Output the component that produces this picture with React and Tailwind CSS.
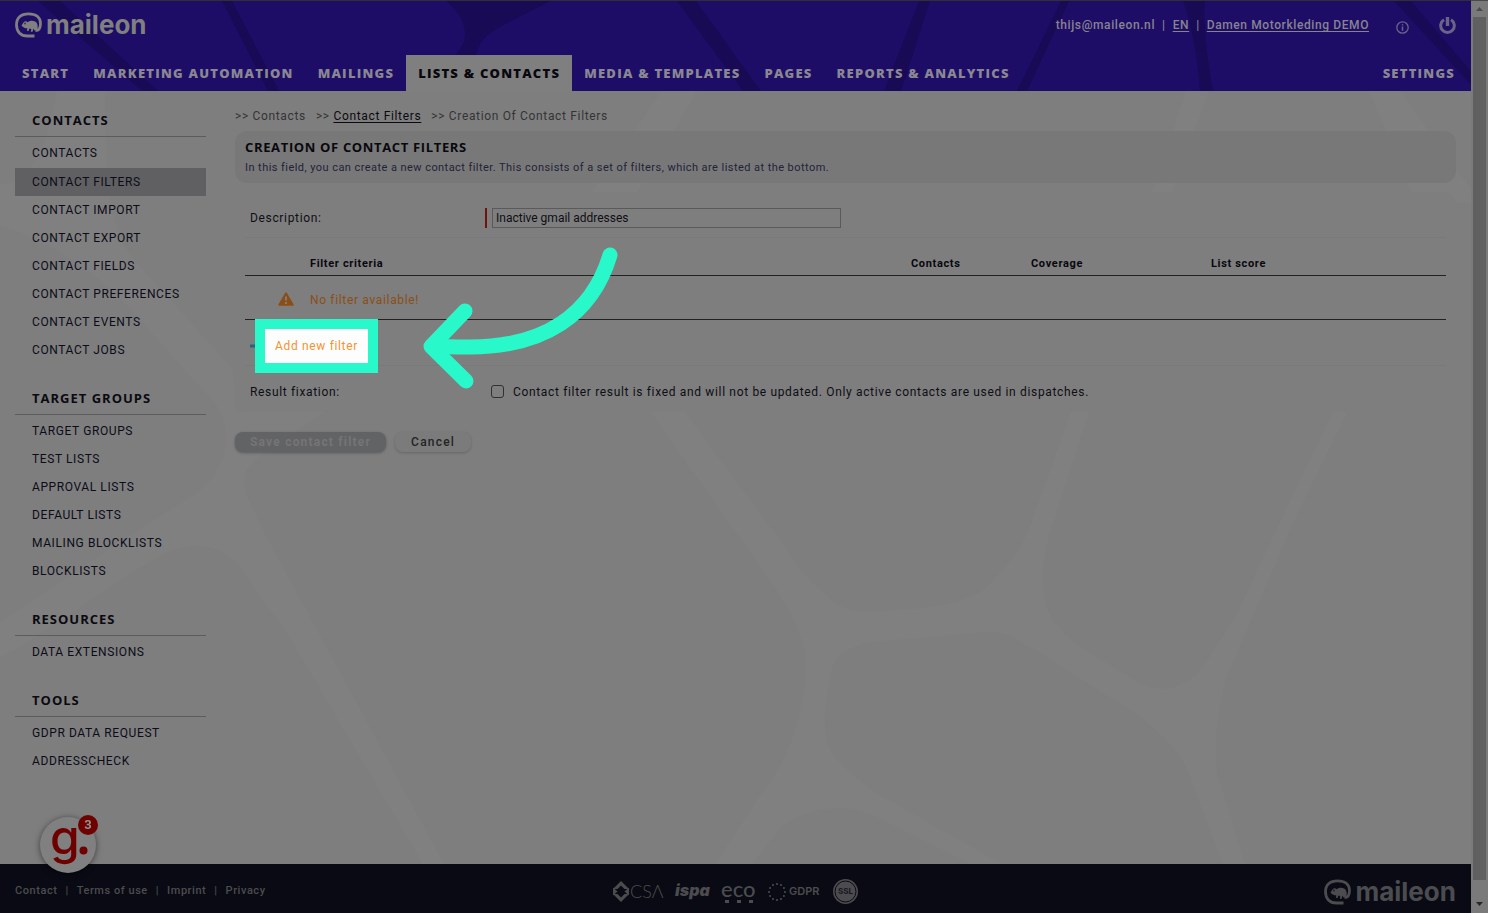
import clsx from 'clsx';

const MAIN_NAV = [
  'Start',
  'Marketing Automation',
  'Mailings',
  'Lists & Contacts',
  'Media & Templates',
  'Pages',
  'Reports & Analytics',
];

const SIDE_NAV = [
  {
    title: 'Contacts',
    items: [
      'Contacts',
      'Contact Filters',
      'Contact Import',
      'Contact Export',
      'Contact Fields',
      'Contact Preferences',
      'Contact Events',
      'Contact Jobs',
    ],
  },
  {
    title: 'Target Groups',
    items: ['Target Groups', 'Test Lists', 'Approval Lists', 'Default Lists', 'Mailing Blocklists', 'Blocklists'],
  },
  { title: 'Resources', items: ['Data Extensions'] },
  { title: 'Tools', items: ['GDPR Data Request', 'Addresscheck'] },
];

const FOOTER_LINKS = ['Contact', 'Terms of use', 'Imprint', 'Privacy'];

const RING = Array.from({ length: 12 }, (_, i) => (i * Math.PI) / 6);

function MaileonLogo({ className }) {
  return (
    <span className={clsx('flex items-center gap-1', className)}>
      <svg width="27" height="26" viewBox="0 0 27 26" fill="none" aria-hidden="true">
        <path
          d="M19.500 24H12.500C5.500 24 1.500 19.500 1.500 12.800C1.500 5.800 5.800 1.800 13.500 1.800C21 1.800 25.500 5.300 25.500 11.500C25.500 16 24 18.600 20.500 18.600"
          stroke="currentColor"
          strokeWidth="2.800"
        />
        <path
          d="M6.500 13.500L8.500 10.500C9.500 9 11.500 8.800 12.500 10.200C14 8.800 17.500 8 20 9.500C22.500 10.800 23.500 14 22 18L19.500 18.500L18.500 16.500L17.500 19.800H15.800L16.300 17L14.500 16.600L13.500 19H12L12.300 16.300C10 16.400 8 15.500 6.500 13.500Z"
          fill="currentColor"
        />
        <circle cx="10" cy="11.500" r="0.900" className="fill-black/60" />
      </svg>
      <span className="font-['Inter',sans-serif] text-[26px] leading-6 font-bold">maileon</span>
    </span>
  );
}

function HeaderPattern() {
  return (
    <svg
      className="absolute inset-0 h-full w-full"
      viewBox="0 0 1471 90"
      preserveAspectRatio="none"
      fill="#180a55"
      aria-hidden="true"
    >
      <path d="M38 0H60L158 90H142Z" />
      <path d="M222 0H232L279 90H268Z" />
      <path d="M446 0H550L500 26C485 34 479 42 476 54H455C464 45 467 35 464 26C462 16 455 8 446 0Z" />
      <path d="M677 0H696L761 90H743Z" />
      <path d="M919 0H930L901 90H884Z" />
      <path d="M1061 0H1069L1027 90H1017Z" />
      <path d="M1183 0H1205C1203 25 1207 55 1213 90H1200C1198 60 1192 25 1183 0Z" />
      <path d="M1394 0H1411L1471 70V84Z" />
    </svg>
  );
}

function PagePattern() {
  return (
    <svg
      className="absolute inset-0 h-full w-full"
      viewBox="0 0 1471 773"
      preserveAspectRatio="none"
      fill="#808080"
      aria-hidden="true"
    >
      <path d="M57 0H105C105 40 106 75 110 106C116 145 125 162 153 189L233 279L236 321H325L268 359C245 375 240 385 247 405L268 449L444 773H423L287 542L237 472C215 450 185 450 153 469C100 500 50 540 0 567V531L134 442L191 406C215 390 226 370 226 346C225 325 220 315 200 296L127 214C100 185 50 150 0 134V94C35 90 48 50 57 0Z" />
      <path d="M662 0H697L637 102H591Z" />
      <path d="M1186 0H1209L1172 102H1152Z" />
      <path d="M1369 0H1400L1471 98V112H1416Z" />
      <path d="M651 321H685L787 459C800 480 810 490 821 499C835 515 850 523 872 521L911 518C930 516 945 514 962 509C980 503 988 497 996 486C1012 470 1022 456 1030 436L1071 321H1089L1053 432C1045 455 1043 470 1043 489C1043 505 1046 518 1053 529C1060 540 1070 548 1081 556L1138 592C1155 600 1172 600 1189 589C1200 582 1206 573 1212 562C1235 530 1248 500 1262 469L1333 321H1347L1291 436L1234 569C1226 585 1222 600 1220 616C1215 640 1215 660 1217 682L1245 773H1223L1195 699C1190 680 1180 663 1166 649C1150 632 1130 617 1110 606L1019 549C1005 541 990 540 974 542L894 549C875 550 855 553 846 561C836 565 833 570 832 579C827 600 824 620 825 636C825 646 827 654 832 662C845 680 862 692 883 706L1002 773H971L883 729C860 717 843 715 826 718C806 720 793 727 781 736L752 773H715L764 699C778 680 787 664 793 646C801 620 806 600 806 572C806 562 803 550 798 539C790 518 780 503 770 489L713 409Z" />
    </svg>
  );
}

function MainNav() {
  return (
    <nav className="relative flex h-9 pr-1 pl-[10px] font-['Open_Sans',sans-serif] text-[13px] font-extrabold tracking-[0.095em] whitespace-nowrap uppercase">
      {MAIN_NAV.map((label) => (
        <a
          key={label}
          href="#"
          className={clsx(
            'flex items-center px-3 pt-px',
            label === 'Lists & Contacts' ? 'bg-[#7f7f7f] text-[#08080e]' : 'text-[#8a8792]'
          )}
        >
          {label}
        </a>
      ))}
      <a href="#" className="ml-auto flex items-center px-3 pt-px text-[#8a8792]">
        Settings
      </a>
    </nav>
  );
}

function Header() {
  return (
    <header className="relative border-t border-[#303030] bg-[#1d0d67] text-[#87848f]">
      <HeaderPattern />
      <div className="relative flex h-[54px] items-start justify-between px-[15px] pt-[11px]">
        <MaileonLogo className="text-[#808080]" />
        <div className="flex h-[26px] items-center text-xs font-medium tracking-wider">
          <span>thijs@maileon.nl</span>
          <span className="px-[7px]">|</span>
          <a href="#" className="underline underline-offset-2">EN</a>
          <span className="px-[7px]">|</span>
          <a href="#" className="underline underline-offset-2">Damen Motorkleding DEMO</a>
          <button type="button" aria-label="Information" className="mt-1 ml-[27px]">
            <svg width="13" height="13" viewBox="0 0 13 13" fill="none" stroke="#6a6488" aria-hidden="true">
              <circle cx="6.500" cy="6.500" r="5.700" strokeWidth="1.300" />
              <path d="M6.500 5.500V9.700M6.500 3.200V4.500" strokeWidth="1.500" />
            </svg>
          </button>
          <button type="button" aria-label="Log out" className="ml-[30px]">
            <svg width="17" height="17" viewBox="0 0 17 17" fill="none" stroke="#6a6488" aria-hidden="true">
              <path d="M5 2.800A6.800 6.800 0 1 0 12 2.800" strokeWidth="3" />
              <path d="M8.500 0V9" strokeWidth="3.400" />
            </svg>
          </button>
        </div>
      </div>
      <MainNav />
    </header>
  );
}

function Sidebar() {
  return (
    <aside className="flex w-[191px] shrink-0 flex-col gap-[18px] pt-[13px] uppercase">
      {SIDE_NAV.map((group) => (
        <nav key={group.title}>
          <h2 className="flex h-[33px] items-center border-b border-[#5c5c5c] pt-px pl-[17px] font-['Open_Sans',sans-serif] text-[13px] font-bold tracking-[1px] text-[#0a0a10]">
            {group.title}
          </h2>
          <ul className="pt-[2px] text-xs tracking-wider text-[#0c0c18]">
            {group.items.map((item) => (
              <li key={item} className={clsx(item === 'Contact Filters' && 'mt-px bg-[#606062]')}>
                <a href="#" className="flex h-7 items-center pl-[17px]">
                  {item}
                </a>
              </li>
            ))}
          </ul>
        </nav>
      ))}
    </aside>
  );
}

function Breadcrumb() {
  return (
    <nav className="flex h-10 items-center gap-[10px] pt-[10px] text-xs tracking-[0.055em] text-[#343434]">
      <span>&gt;&gt; Contacts</span>
      <span>
        &gt;&gt;{' '}
        <a href="#" className="text-[#0a0a10] underline underline-offset-2">
          Contact Filters
        </a>
      </span>
      <span>&gt;&gt; Creation Of Contact Filters</span>
    </nav>
  );
}

function FilterTable() {
  return (
    <table className="w-full table-fixed text-left">
      <colgroup>
        <col className="w-[60px]" />
        <col />
        <col className="w-[120px]" />
        <col className="w-[180px]" />
        <col className="w-[240px]" />
      </colgroup>
      <thead>
        <tr className="h-[37px] border-b border-[#222] text-[11px] leading-4 text-[#08080e]">
          <th aria-label="Status" />
          <th className="px-[5px] pt-4">Filter criteria</th>
          <th className="px-[5px] pt-4">Contacts</th>
          <th className="px-[5px] pt-4">Coverage</th>
          <th className="px-[5px] pt-4">List score</th>
        </tr>
      </thead>
      <tbody>
        <tr className="h-11 border-b border-[#222] text-xs text-[#8a4f17]">
          <td className="pt-1 pl-[33px]">
            <svg width="16" height="14" viewBox="0 0 16 14" aria-label="Warning">
              <path d="M8 1L15 13H1Z" fill="#8a4f17" stroke="#8a4f17" strokeWidth="1.500" strokeLinejoin="round" />
              <path d="M8 4.500V8.500M8 10V12" stroke="#808080" strokeWidth="1.800" />
            </svg>
          </td>
          <td className="px-[5px] pt-[6px]" colSpan={4}>
            No filter available!
          </td>
        </tr>
      </tbody>
    </table>
  );
}

function Arrow() {
  return (
    <svg
      className="pointer-events-none absolute bottom-[-25px] left-[177px] text-[#29f9ca]"
      width="200"
      height="145"
      viewBox="422 245 200 145"
      fill="none"
      stroke="currentColor"
      strokeWidth="15"
      strokeLinecap="round"
      strokeLinejoin="round"
      aria-hidden="true"
    >
      <path d="M610 255C592 315 544 347 470 347C458 347 445 347 432 346" />
      <path d="M465 311L431 346.500L466 381" />
    </svg>
  );
}

function FilterForm() {
  return (
    <form className="mt-[9px] text-xs tracking-[0.055em] text-[#0e0e14]">
      <div className="rounded-xl bg-[#7e7e7e] px-[10px]">
        <div className="flex h-[46px] items-center border-b border-[#797979] pt-[6px] pl-[5px]">
          <label htmlFor="description" className="w-[235px]">
            Description:
          </label>
          <div className="border-l-2 border-[#6f1408] pl-[5px]">
            <input
              id="description"
              defaultValue="Inactive gmail addresses"
              className="block h-5 w-[349px] border border-[#5a5a5a] px-[3px] tracking-normal"
            />
          </div>
        </div>
        <FilterTable />
        <div className="relative flex h-[46px] items-start border-b border-[#797979] pt-[9px] pl-[5px]">
          <svg width="15" height="34" viewBox="0 0 15 34" aria-hidden="true">
            <path d="M0 17H13M6.500 10V24" stroke="#2d627c" strokeWidth="3" />
          </svg>
          <button
            type="button"
            className="h-[34px] w-[103px] bg-[#fdfdfd] tracking-[0.055em] text-[#f59331] outline-10 outline-[#29f9ca]"
          >
            Add new filter
          </button>
          <Arrow />
        </div>
        <div className="flex h-[46px] items-center pt-[6px] pl-[5px]">
          <span className="w-[241px]">Result fixation:</span>
          <input
            id="fixation"
            type="checkbox"
            className="size-[13px] appearance-none rounded-[3px] border border-[#303030]"
          />
          <label htmlFor="fixation" className="pl-[9px]">
            Contact filter result is fixed and will not be updated. Only active contacts are used in dispatches.
          </label>
        </div>
      </div>
      <div className="flex gap-[9px] pt-5">
        <button
          type="submit"
          disabled
          className="h-5 rounded-lg bg-[#626365] px-[15px] pt-px font-bold tracking-widest text-[#757575] shadow-[0_1px_3px_rgba(0,0,0,0.3)]"
        >
          Save contact filter
        </button>
        <button
          type="button"
          className="h-5 rounded-lg bg-[#7b7b7b] px-4 pt-px font-medium tracking-widest text-[#242424] shadow-[0_1px_3px_rgba(0,0,0,0.2)]"
        >
          Cancel
        </button>
      </div>
    </form>
  );
}

function Certificates() {
  return (
    <svg
      className="overflow-visible tracking-normal"
      width="249"
      height="32"
      viewBox="611 876 249 32"
      fill="#4c4c50"
      role="img"
      aria-label="Certifications"
    >
      <path d="M621 881L629 889H624.500L621 885.500L617.500 889H613ZM621 902L629 894H624.500L621 897.500L617.500 894H613Z" />
      <path d="M613 887.500L617.500 891.500L613 895.500ZM629 887.500L624.500 891.500L629 895.500Z" />
      <text x="630" y="898" fontFamily="Lato, sans-serif" fontSize="18" fontWeight="300">CSΛ</text>
      <text x="675" y="896" fontFamily="Inter, sans-serif" fontSize="16" fontWeight="900" fontStyle="italic">ispa</text>
      <text x="721" y="897" fontFamily="Lato, sans-serif" fontSize="22">eco</text>
      <path d="M725 900H729V903H725ZM737 900H741V903H737ZM749 900H753V903H749Z" />
      {RING.map((angle) => (
        <circle key={angle} cx={777 + 8 * Math.cos(angle)} cy={892 + 8 * Math.sin(angle)} r="1" />
      ))}
      <text x="789" y="895" fontFamily="Inter, sans-serif" fontSize="11" fontWeight="600">GDPR</text>
      <circle cx="845.500" cy="891.500" r="12.500" />
      <circle cx="845.500" cy="891.500" r="10.500" fill="none" stroke="#090a13" strokeWidth="1" />
      <text x="845.500" y="894" textAnchor="middle" fontFamily="Inter, sans-serif" fontSize="8" fontWeight="700" fill="#17171f">
        SSL
      </text>
    </svg>
  );
}

function Footer() {
  return (
    <footer className="relative grid h-[49px] grid-cols-[1fr_auto_1fr] items-center bg-[#090a13] px-[15px] pt-[6px] text-[11px] font-medium tracking-wider text-[#4c4c50]">
      <div className="flex">
        {FOOTER_LINKS.map((label, i) => (
          <span key={label}>
            {i > 0 && <span className="px-2">|</span>}
            <a href="#">{label}</a>
          </span>
        ))}
      </div>
      <Certificates />
      <MaileonLogo className="justify-self-end tracking-normal" />
    </footer>
  );
}

function GuideWidget() {
  return (
    <button
      type="button"
      aria-label="Open guides, 3 new"
      className="fixed bottom-10 left-10 size-14 rounded-full bg-[#808080] shadow-[0_1px_6px_rgba(0,0,0,0.5)]"
    >
      <svg className="overflow-visible" width="56" height="56" viewBox="0 0 56 56" fill="#6e0000" aria-hidden="true">
        <text x="10" y="37" fontFamily="Inter, sans-serif" fontSize="48" fontWeight="500">g</text>
        <circle cx="43.500" cy="33.500" r="4" />
      </svg>
      <span className="absolute top-[-2px] right-[-2px] flex size-5 items-center justify-center rounded-full bg-[#6e0000] text-[13px] font-bold text-[#909090]">
        3
      </span>
    </button>
  );
}

function Scrollbar() {
  return (
    <div className="flex w-[17px] shrink-0 flex-col items-center border-t border-[#4a4a4a] bg-[#7a7a7a]" aria-hidden="true">
      <svg width="17" height="16" viewBox="0 0 17 16" fill="#4c4c4c">
        <path d="M5 10H12L8.500 6Z" />
      </svg>
      <div className="w-[13px] flex-1 bg-[#606060]" />
      <svg width="17" height="33" viewBox="0 0 17 33" fill="#282828">
        <path d="M5 22H12L8.500 26Z" />
      </svg>
    </div>
  );
}

export default function App() {
  return (
    <div className="flex min-h-screen bg-[#7e7e7e] font-['Roboto',sans-serif]">
      <div className="flex min-w-0 flex-1 flex-col">
        <Header />
        <div className="relative flex flex-1">
          <PagePattern />
          <div className="relative flex flex-1 gap-[29px] px-[15px]">
            <Sidebar />
            <main className="min-w-0 flex-1">
              <Breadcrumb />
              <section className="h-[52px] rounded-xl bg-[#787878] px-[10px] pt-2">
                <h1 className="font-['Open_Sans',sans-serif] text-[13px] leading-4 font-bold tracking-wider text-[#08080e] uppercase">
                  Creation of contact filters
                </h1>
                <p className="pt-[5px] text-[11px] leading-4 tracking-[0.04em] text-[#232338]">
                  In this field, you can create a new contact filter. This consists of a set of filters, which are listed
                  at the bottom.
                </p>
              </section>
              <FilterForm />
            </main>
          </div>
        </div>
        <Footer />
      </div>
      <Scrollbar />
      <GuideWidget />
    </div>
  );
}
